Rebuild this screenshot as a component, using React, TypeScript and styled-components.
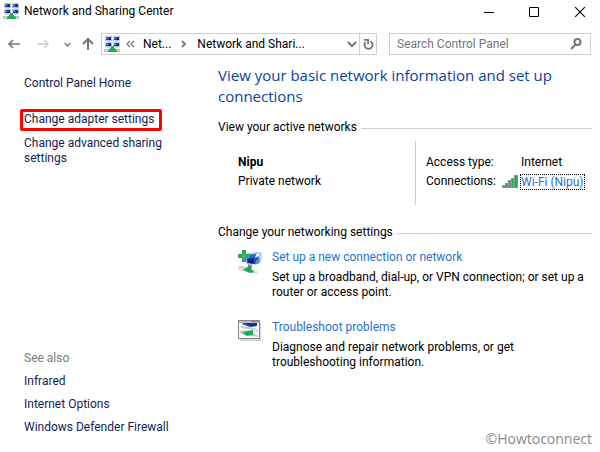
import React from "react";
import styled, { createGlobalStyle } from "styled-components";

const GlobalStyle = createGlobalStyle`
  *, *::before, *::after { box-sizing: border-box; }
  html, body, #root { margin: 0; padding: 0; }
  body {
    background: #fff;
    color: #000;
    font-family: Roboto, "Liberation Sans", sans-serif;
    font-size: 12px;
    line-height: 15px;
  }
  button, input { font: inherit; color: inherit; }
  svg { display: block; flex: none; }
`;

const Window = styled.div`
  display: flex;
  flex-direction: column;
  min-height: 100vh;
`;

const TitleBar = styled.header`
  display: flex;
  align-items: center;
  height: 23px;
  padding-left: 3px;
`;

const Title = styled.h1`
  flex: 1;
  margin: 0 0 0 5px;
  font-size: 12px;
  font-weight: 400;
  white-space: nowrap;
`;

const IconButton = styled.button<{ $width: number }>`
  display: flex;
  align-items: center;
  justify-content: center;
  flex: none;
  width: ${(p) => p.$width}px;
  height: 20px;
  padding: 0;
  border: 0;
  background: none;
`;

const WindowControls = styled.div`
  display: flex;
  margin-right: -3px;
`;

const NavBar = styled.nav`
  display: flex;
  align-items: center;
  margin-top: 10px;
  padding: 0 9px 0 2px;
`;

const AddressBar = styled.div`
  display: flex;
  align-items: center;
  flex: 276 1 276px;
  min-width: 0;
  height: 22px;
  padding-left: 2px;
  border: 1px solid #d0d0d0;
`;

const Crumb = styled.button`
  padding: 0;
  border: 0;
  background: none;
  white-space: nowrap;
`;

const CrumbGap = styled.span`
  display: flex;
  justify-content: center;
  width: 26px;
`;

const Refresh = styled.div`
  display: flex;
  height: 20px;
  margin-left: auto;
`;

const RefreshEdge = styled.div`
  border-left: 1px solid #d0d0d0;
`;

const SearchBox = styled.label`
  display: flex;
  align-items: center;
  flex: 202 1 202px;
  min-width: 0;
  height: 22px;
  margin-left: 12px;
  padding: 0 8px 0 7px;
  border: 1px solid #d0d0d0;
`;

const SearchInput = styled.input`
  flex: 1;
  min-width: 0;
  padding: 0;
  border: 0;
  outline: 0;
  background: none;
  &::placeholder { color: #767676; opacity: 1; }
`;

const Body = styled.div`
  display: grid;
  grid-template-columns: 218px minmax(0, 1fr);
  flex: 1;
`;

const Sidebar = styled.aside`
  display: flex;
  flex-direction: column;
  align-items: flex-start;
  gap: 8px;
  padding: 21px 40px 17px 24px;
`;

const SideLink = styled.a`
  color: #151c55;
  text-decoration: none;
`;

const Highlight = styled.div`
  margin: 10px 0 -3px -4px;
  padding: 0 5px 1px 1px;
  border: 3px solid #f00;
  border-radius: 2px;
  white-space: nowrap;
`;

const SeeAlso = styled.div`
  margin-top: auto;
  color: #76807a;
`;

const Main = styled.main`
  display: flex;
  flex-direction: column;
  padding: 10px 8px 4px 0;
`;

const Heading = styled.h2`
  margin: 0 0 13px;
  color: #0a41a6;
  font-family: "Open Sans", "Noto Sans", sans-serif;
  font-size: 15px;
  font-weight: 400;
  line-height: 21px;
`;

const SectionTitle = styled.h3`
  display: flex;
  align-items: center;
  gap: 4px;
  margin: 0;
  font-size: 12px;
  font-weight: 400;
  white-space: nowrap;
  &::after {
    content: "";
    flex: 1;
    height: 1px;
    margin-top: 2px;
    background: #d0d0d0;
  }
`;

const NetworkPanel = styled.div`
  display: grid;
  grid-template-columns: 197px 1fr;
  margin: 6px 0 20px;
  line-height: 19px;
`;

const NetworkName = styled.div`
  padding: 12px 0 14px 20px;
`;

const Details = styled.dl`
  display: grid;
  grid-template-columns: 76px 1fr;
  align-content: start;
  margin: 0;
  padding: 12px 0 14px 10px;
  border-left: 1px solid #d0d0d0;
`;

const Term = styled.dt`
  white-space: nowrap;
`;

const Value = styled.dd<{ $indent?: boolean }>`
  display: flex;
  align-items: center;
  gap: 3px;
  margin: 0;
  padding-left: ${(p) => (p.$indent ? 19 : 0)}px;
  white-space: nowrap;
`;

const Link = styled.a`
  color: #1f74cf;
  text-decoration: none;
`;

const FocusedLink = styled(Link)`
  line-height: 14px;
  outline: 1px dotted #000;
`;

const Task = styled.section`
  display: grid;
  grid-template-columns: 24px 1fr;
  column-gap: 10px;
  margin: 10px 0;
  padding-left: 20px;
`;

const TaskText = styled.p`
  margin: 5px 0 0;
`;

const Line = styled.span`
  display: block;
  white-space: nowrap;
`;

const Credit = styled.footer`
  margin-top: auto;
  color: #8a8a8a;
  font-family: "Open Sans", "Noto Sans", sans-serif;
  font-size: 14px;
  line-height: 18px;
  text-align: right;
`;

function Monitor({ x, y }: { x: number; y: number }) {
  return (
    <g transform={`translate(${x} ${y})`}>
      <path d="M0 0h7v5H0z" fill="#bcc9d6" />
      <path d="M1 1h5v3H1z" fill="#1b3fae" />
      <path d="M1 1h2v2H1z" fill="#4f83dc" />
      <path d="M4 2h2v2H4z" fill="#0b2280" />
      <path d="M2 5h4v1H2z" fill="#d9dde0" />
    </g>
  );
}

function NetworkIcon() {
  return (
    <svg width="16" height="17" viewBox="0 0 16 17" shapeRendering="crispEdges" aria-hidden="true">
      <Monitor x={1} y={0} />
      <Monitor x={9} y={0} />
      <Monitor x={1} y={6} />
      <Monitor x={9} y={6} />
      <path d="M0 13h16v3H0z" fill="#b9bdba" />
      <path d="M1 14h14v1H1z" fill="#e4e6e4" />
      <path d="M7 10h3v2h1v1h1v1h1v2H4v-2h1v-1h1v-1h1z" fill="#22ac5c" />
    </svg>
  );
}

function BackArrow() {
  return (
    <svg width="14" height="14" viewBox="0 0 14 14" fill="none" stroke="#777" aria-hidden="true">
      <path d="M13 7H2M6 3L2 7l4 4" strokeWidth="1.7" />
    </svg>
  );
}

function ForwardArrow() {
  return (
    <svg width="14" height="14" viewBox="0 0 14 14" fill="none" stroke="#c9cec4" aria-hidden="true">
      <path d="M1 7h11M8 3l4 4-4 4" strokeWidth="1.4" />
    </svg>
  );
}

function UpArrow() {
  return (
    <svg width="14" height="14" viewBox="0 0 14 14" fill="none" stroke="#777" aria-hidden="true">
      <path d="M7 13V2M2 7l5-5 5 5" strokeWidth="2" />
    </svg>
  );
}

function ChevronDown({ size }: { size: number }) {
  return (
    <svg width={size} height={size} viewBox="0 0 10 10" fill="none" stroke="#777" strokeWidth="2" aria-hidden="true">
      <path d="M1 3l4 4 4-4" />
    </svg>
  );
}

function SignalIcon() {
  return (
    <svg width="16" height="13" viewBox="0 0 16 13" shapeRendering="crispEdges" aria-hidden="true">
      <path d="M0 10h3v3H0zM3 8h3v5H3zM6 5h3v8H6zM9 3h3v10H9zM12 0h4v13h-4z" fill="#8b918c" />
      <path d="M1 11h1v1H1zM4 9h1v3H4zM7 6h1v6H7zM10 4h1v8h-1zM13 1h2v11h-2z" fill="#22ac5c" />
    </svg>
  );
}

function NewConnectionIcon() {
  return (
    <svg width="24" height="24" viewBox="0 0 24 24" aria-hidden="true">
      <path d="M9 3l13-1 2 1-1 10-6 2-9-1z" fill="#b5d5ee" />
      <path d="M8 5l8-1 1 10-8-1z" fill="#2767c4" />
      <path d="M9 9l7-1 1 6-7-1z" fill="#0b239e" />
      <path d="M16 4l5-1-1 10-4 1z" fill="#2456b5" />
      <path d="M18 4l3-1v3l-4 2z" fill="#e5f5ff" />
      <path d="M18 10l4-2-1 5-3 1z" fill="#5588ca" />
      <path d="M10 14l4 1v2l-4 1z" fill="#8b9298" />
      <path d="M0 17l4-1 15 5 1 3-5-1L1 20z" fill="#c6cdca" />
      <path d="M5 20l6-4 3 1-1 2 3 3-4 1z" fill="#20a859" />
      <path d="M1 18l4 1-1 1-3-1zM16 21l3 1v1l-3-1z" fill="#eef1ef" />
      <path d="M4 0h4v4h4v4H8v4H4V8H0V4h4z" fill="#22ac5c" />
      <path d="M6 3v6M4 6h5" stroke="#829b8a" />
    </svg>
  );
}

function TroubleshootIcon() {
  return (
    <svg width="24" height="21" viewBox="0 0 24 21" aria-hidden="true">
      <path d="M2 20h20V3" fill="none" stroke="#d8d8d8" strokeWidth="2" />
      <rect x="0.5" y="0.5" width="21" height="18" fill="#fafafa" stroke="#858585" />
      <path d="M1 1h20v2H1z" fill="#b5b9bd" />
      <path d="M14 1h1v1h-1zM16 1h1v1h-1zM19 1h1v1h-1z" fill="#555" />
      <path d="M3 6l8 1 9 2-2 1-9-1-6-1z" fill="#c3cbd1" />
      <path d="M5 3h14v3l-7 1-8-3z" fill="#2442b2" />
      <path d="M8 3l7 1 4-1v2l-5 1z" fill="#0b2394" />
      <path d="M2 11l5-1 12 5 1 2-5-1L2 13z" fill="#c4c8c5" />
      <path d="M4 13l5-2 6-1v5l-6 1z" fill="#20a859" />
      <path d="M16 9h4v4l-4-1z" fill="#e7e0df" />
    </svg>
  );
}

export default function App() {
  return (
    <>
      <GlobalStyle />
      <Window>
        <TitleBar>
          <NetworkIcon />
          <Title>Network and Sharing Center</Title>
          <WindowControls>
            <IconButton $width={45} aria-label="Minimize">
              <svg width="10" height="10" viewBox="0 0 10 10"><path d="M0 5h10v1H0z" /></svg>
            </IconButton>
            <IconButton $width={46} aria-label="Maximize">
              <svg width="10" height="10" viewBox="0 0 10 10" fill="none" stroke="#000"><path d="M.5.5h9v9h-9z" /></svg>
            </IconButton>
            <IconButton $width={46} aria-label="Close">
              <svg width="10" height="10" viewBox="0 0 10 10" stroke="#000" strokeWidth="1.1"><path d="M0 0l10 10M10 0L0 10" /></svg>
            </IconButton>
          </WindowControls>
        </TitleBar>

        <NavBar>
          <IconButton $width={24} aria-label="Back"><BackArrow /></IconButton>
          <IconButton $width={34} aria-label="Forward"><ForwardArrow /></IconButton>
          <IconButton $width={14} aria-label="Recent locations"><ChevronDown size={7} /></IconButton>
          <IconButton $width={27} aria-label="Up"><UpArrow /></IconButton>
          <AddressBar>
            <NetworkIcon />
            <IconButton $width={23} aria-label="Earlier folders">
              <svg width="12" height="8" viewBox="0 0 12 8" fill="none" stroke="#777" strokeWidth="1.3">
                <path d="M4 1L1 4l3 3M8 1L5 4l3 3" />
              </svg>
            </IconButton>
            <Crumb>Net...</Crumb>
            <CrumbGap>
              <svg width="6" height="8" viewBox="0 0 6 8" fill="none" stroke="#777" strokeWidth="1.8" aria-hidden="true">
                <path d="M1 1l3 3-3 3" />
              </svg>
            </CrumbGap>
            <Crumb>Network and Shari...</Crumb>
            <Refresh>
              <IconButton $width={15} aria-label="Address history"><ChevronDown size={10} /></IconButton>
              <RefreshEdge>
                <IconButton $width={16} aria-label="Refresh">
                  <svg width="11" height="12" viewBox="0 0 11 12" fill="none" stroke="#777" strokeWidth="1.8">
                    <path d="M2.4 4.2a4 4 0 1 0 5 -0.900" />
                    <path d="M1 1.900h4.100v4" />
                  </svg>
                </IconButton>
              </RefreshEdge>
            </Refresh>
          </AddressBar>
          <SearchBox>
            <SearchInput type="search" aria-label="Search Control Panel" placeholder="Search Control Panel" />
            <svg width="12" height="12" viewBox="0 0 12 12" fill="none" stroke="#777" strokeWidth="2" aria-hidden="true">
              <circle cx="7.5" cy="4" r="3" />
              <path d="M5.5 6.5L1 11" />
            </svg>
          </SearchBox>
        </NavBar>

        <Body>
          <Sidebar>
            <SideLink href="#home">Control Panel Home</SideLink>
            <Highlight><SideLink href="#adapter">Change adapter settings</SideLink></Highlight>
            <SideLink href="#sharing">Change advanced sharing settings</SideLink>
            <SeeAlso>See also</SeeAlso>
            <SideLink href="#infrared">Infrared</SideLink>
            <SideLink href="#internet">Internet Options</SideLink>
            <SideLink href="#firewall">Windows Defender Firewall</SideLink>
          </Sidebar>

          <Main>
            <Heading>View your basic network information and set up connections</Heading>
            <SectionTitle>View your active networks</SectionTitle>
            <NetworkPanel>
              <NetworkName>
                <b>Nipu</b>
                <br />
                Private network
              </NetworkName>
              <Details>
                <Term>Access type:</Term>
                <Value $indent>Internet</Value>
                <Term>Connections:</Term>
                <Value>
                  <SignalIcon />
                  <FocusedLink href="#wifi">Wi-Fi (Nipu)</FocusedLink>
                </Value>
              </Details>
            </NetworkPanel>
            <SectionTitle>Change your networking settings</SectionTitle>
            <Task>
              <NewConnectionIcon />
              <div>
                <Link href="#setup">Set up a new connection or network</Link>
                <TaskText>
                  <Line>Set up a broadband, dial-up, or VPN connection; or set up a</Line>
                  <Line>router or access point.</Line>
                </TaskText>
              </div>
            </Task>
            <Task>
              <TroubleshootIcon />
              <div>
                <Link href="#troubleshoot">Troubleshoot problems</Link>
                <TaskText>
                  <Line>Diagnose and repair network problems, or get</Line>
                  <Line>troubleshooting information.</Line>
                </TaskText>
              </div>
            </Task>
            <Credit>©Howtoconnect</Credit>
          </Main>
        </Body>
      </Window>
    </>
  );
}
